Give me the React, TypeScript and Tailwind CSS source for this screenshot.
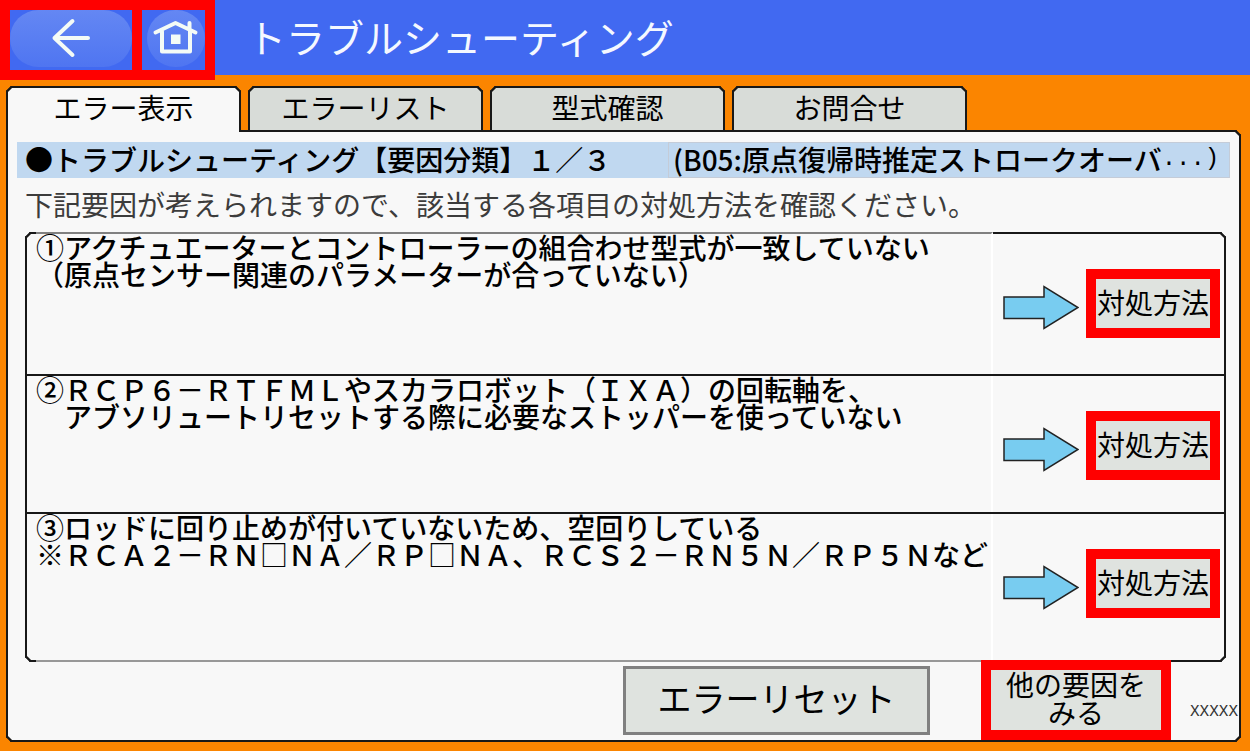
import type { ReactNode } from "react"
import clsx from "clsx"

type Cause = {
  id: number
  lines: string[]
}

const tabs = ["エラー表示", "エラーリスト", "型式確認", "お問合せ"]

const causes: Cause[] = [
  {
    id: 1,
    lines: [
      "①アクチュエーターとコントローラーの組合わせ型式が一致していない",
      "（原点センサー関連のパラメーターが合っていない）",
    ],
  },
  {
    id: 2,
    lines: [
      "②ＲＣＰ６－ＲＴＦＭＬやスカラロボット（ＩＸＡ）の回転軸を、",
      "　アブソリュートリセットする際に必要なストッパーを使っていない",
    ],
  },
  {
    id: 3,
    lines: [
      "③ロッドに回り止めが付いていないため、空回りしている",
      "※ＲＣＡ２－ＲＮ□ＮＡ／ＲＰ□ＮＡ、ＲＣＳ２－ＲＮ５Ｎ／ＲＰ５Ｎなど",
    ],
  },
]

export default function App() {
  return (
    <div
      lang="ja"
      className="flex min-h-screen flex-col bg-[#fb8500] font-['Noto_Sans_CJK_JP',sans-serif] text-[28px] leading-7 text-black"
    >
      <Header />
      <main className="flex flex-1 flex-col pt-[11px] pr-[9px] pb-[9px] pl-1.5">
        <TabBar />
        <section className="flex flex-1 flex-col rounded-[5px] rounded-tl-none border-2 border-[#181818] bg-[#f8f8f8] pt-2.5 [corner-shape:bevel]">
          <Banner />
          <p className="mt-2.5 px-[17px] leading-8 whitespace-nowrap text-[#3c3c3c]">
            下記要因が考えられますので、該当する各項目の対処方法を確認ください。
          </p>
          <CauseList />
          <Footer />
        </section>
      </main>
    </div>
  )
}

function Header() {
  return (
    <header className="flex h-[75px] items-start bg-[#4169f1]">
      <button
        type="button"
        aria-label="戻る"
        className="relative flex h-20 w-[142px] shrink-0 overflow-hidden border-10 border-[#ff0000] bg-[#4169f1]"
      >
        <span className="flex h-[57px] w-full items-center justify-center rounded-full bg-linear-to-b from-[#6487f3] to-[#4f75f1] pb-0.5">
          <BackIcon />
        </span>
      </button>
      <button
        type="button"
        aria-label="ホーム"
        className="relative flex h-20 w-[73px] shrink-0 overflow-hidden border-10 border-l-0 border-[#ff0000] bg-[#4169f1] pl-[5px]"
      >
        <span className="flex h-[57px] w-[58px] shrink-0 items-center justify-center rounded-full bg-linear-to-b from-[#6487f3] to-[#4f75f1] pb-1">
          <HomeIcon />
        </span>
      </button>
      <h1 className="ml-8 text-[39px] leading-[72px] whitespace-nowrap text-[#f4f8ff]">
        トラブルシューティング
      </h1>
    </header>
  )
}

function TabBar() {
  return (
    <div role="tablist" className="flex gap-[7px]">
      {tabs.map((label, i) => (
        <button
          key={label}
          type="button"
          role="tab"
          aria-selected={i === 0}
          className={clsx(
            "w-[235px] rounded-t-[5px] border-2 border-b-0 border-[#181818] [corner-shape:bevel]",
            i === 0
              ? "relative -mb-0.5 h-[46px] bg-[#f8f8f8] pb-1.5"
              : "h-11 bg-[#d8dcd8] pb-1",
          )}
        >
          {label}
        </button>
      ))}
    </div>
  )
}

function Banner() {
  return (
    <div className="mx-[9px] flex h-9 items-center justify-between bg-[#c0d8f0] font-medium whitespace-nowrap">
      <h2 className="pb-0.5 pl-2">●トラブルシューティング【要因分類】１／３</h2>
      <div className="flex h-9 w-[562px] items-center border border-[#c4ccd8] pb-0.5 pl-1">
        (B05:原点復帰時推定ストロークオーバ<Half>...)</Half>
      </div>
    </div>
  )
}

function Half({ children }: { children: ReactNode }) {
  return (
    <span className="font-['Liberation_Mono',monospace] text-2xl leading-7">
      {children}
    </span>
  )
}

function CauseList() {
  return (
    <ol className="mt-3 mr-[13px] ml-[17px] rounded-[5px] border-2 border-[#181818] [corner-shape:bevel]">
      {causes.map((cause) => (
        <CauseRow key={cause.id} cause={cause} />
      ))}
    </ol>
  )
}

function CauseRow({ cause }: { cause: Cause }) {
  return (
    <li className="group flex min-h-[138px] border-b-2 border-[#181818] first:min-h-[142px] last:min-h-[146px] last:border-b-0">
      <div className="ml-[9px] flex-1 border-r-2 border-r-white border-t-[#808080] border-b-[#989898] leading-[27px] font-medium whitespace-nowrap group-first:-mt-0.5 group-first:border-t-2 group-last:-mb-0.5 group-last:border-b-2">
        {cause.lines.map((line) => (
          <p key={line}>{line}</p>
        ))}
      </div>
      <div className="flex w-[231px] items-start justify-end gap-[7px] pt-[35px] pr-1">
        <ArrowShape />
        <button
          type="button"
          className="h-[69px] w-[134px] border-10 border-[#ff0000] bg-[#dfe3df] pb-1 whitespace-nowrap"
        >
          <span className="-mx-1">対処方法</span>
        </button>
      </div>
    </li>
  )
}

function Footer() {
  return (
    <footer className="relative -mt-0.5 flex items-center justify-end pr-px">
      <button
        type="button"
        className="mr-[51px] h-[69px] w-[307px] border-3 border-[#808080] bg-[#dfe3df] pb-1 text-[34px]"
      >
        エラーリセット
      </button>
      <button
        type="button"
        className="h-20 w-[190px] border-10 border-[#ff0000] bg-[#dfe3df] pb-1"
      >
        他の要因を
        <br />
        みる
      </button>
      <span className="mt-6 ml-[19px] font-['Liberation_Mono',monospace] text-base text-[#333]">
        XXXXX
      </span>
    </footer>
  )
}

function BackIcon() {
  return (
    <svg width="40" height="40" viewBox="0 0 40 40" fill="none" stroke="#f4fbf6" strokeWidth="4" strokeLinecap="round" strokeLinejoin="round" aria-hidden="true">
      <path d="M37 20H3.5M21.5 3L3.5 20L21.5 37" />
    </svg>
  )
}

function HomeIcon() {
  return (
    <svg width="48" height="36" viewBox="0 0 48 36" fill="none" stroke="#f4fbf6" strokeWidth="4" strokeLinecap="round" strokeLinejoin="round" aria-hidden="true">
      <path d="M3.5 13.5L23.5 4L43.5 13.5M37.5 4V10M10 12.5V32.5H38V12.5" />
      <rect x="19" y="15.5" width="9.5" height="9.5" fill="#f4fbf6" stroke="none" />
    </svg>
  )
}

function ArrowShape() {
  return (
    <svg width="76" height="45" viewBox="0 0 76 45" className="mt-4" aria-hidden="true">
      <path d="M1 12H41V1.5L75 22.5L41 43.5V33.5H1Z" fill="#78ccf0" stroke="#222" strokeWidth="1.5" />
    </svg>
  )
}
